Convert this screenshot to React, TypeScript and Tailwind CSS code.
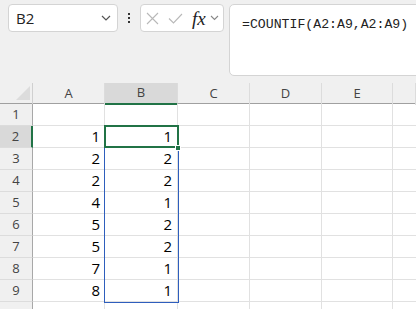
import React from "react";

const colA = [1, 2, 2, 4, 5, 5, 7, 8];
const colB = [1, 2, 2, 1, 2, 2, 1, 1];
const cols = ["A", "B", "C", "D", "E", ""];

export default function App() {
  const font = { fontFamily: '"Open Sans", "Noto Sans", Arial, sans-serif' };
  return (
    <div className="w-[416px] h-[309px] overflow-hidden bg-white relative" style={font}>
      {/* top toolbar */}
      <div className="h-[83px] bg-[#f0f0f0] flex items-start pt-[4px] pl-[8px] overflow-hidden">
        <div className="shrink-0 w-[110px] h-[28px] bg-white border border-[#d4d4d4] rounded-[4px] flex items-center justify-between pl-[7px] pr-[6px]">
          <span className="text-[15px] text-[#222]">B2</span>
          <svg width="10" height="6" viewBox="0 0 10 6"><path d="M1 1l4 4 4-4" fill="none" stroke="#555" strokeWidth="1.2" /></svg>
        </div>
        <div className="shrink-0 w-[22px] h-[28px] flex flex-col items-center justify-center gap-[2px]">
          <div className="w-[2px] h-[2px] bg-[#333]" />
          <div className="w-[2px] h-[2px] bg-[#333]" />
          <div className="w-[2px] h-[2px] bg-[#333]" />
        </div>
        <div className="shrink-0 w-[84px] h-[28px] bg-white border border-[#d4d4d4] rounded-[4px] flex items-center pl-[5px] pr-[3px]">
          <svg width="13" height="13" viewBox="0 0 13 13"><path d="M1 1l11 11M12 1L1 12" stroke="#b8b8b8" strokeWidth="1.1" /></svg>
          <svg width="15" height="11" viewBox="0 0 15 11" className="ml-[9px]"><path d="M1 5.5l4.5 4.5L14 1" fill="none" stroke="#b8b8b8" strokeWidth="1.1" /></svg>
          <span className="ml-[9px] text-[19px] italic text-[#222] leading-none" style={{ fontFamily: '"Liberation Serif", "DejaVu Serif", serif' }}>fx</span>
          <svg width="9" height="6" viewBox="0 0 9 6" className="ml-[4px]"><path d="M1 1l3.5 3.5L8 1" fill="none" stroke="#888" strokeWidth="1.1" /></svg>
        </div>
        <div className="shrink-0 ml-[5px] w-[200px] h-[72px] bg-white border border-[#d4d4d4] rounded-[5px] pl-[12px] pt-[5px]">
          <span className="text-[13.2px] text-[#222]" style={{ fontFamily: '"Liberation Mono", "DejaVu Sans Mono", monospace' }}>=COUNTIF(A2:A9,A2:A9)</span>
        </div>
      </div>

      {/* column headers */}
      <div className="grid grid-cols-[33px_72px_73px_72px_72px_71px_1fr] h-[21px] bg-[#f0f0f0] border-b border-[#a0a0a0]">
        <div className="relative border-r border-[#d0d0d0]">
          <svg className="absolute left-[16px] top-[3px]" width="14" height="14" viewBox="0 0 14 14"><path d="M14 0L14 14L0 14Z" fill="#dcdcdc" /></svg>
        </div>
        {cols.map((c) => (
          <div
            key={c || "f"}
            className={
              "flex items-center justify-center text-[13px] text-[#444] border-r border-[#dcdcdc] " +
              (c === "B" ? "bg-[#d9d9d9] text-[#1e6b3c] border-b-2 border-b-[#217346]" : "")
            }
          >
            {c}
          </div>
        ))}
      </div>

      {/* grid */}
      <div className="relative">
        <div className="grid grid-cols-[33px_72px_73px_72px_72px_71px_1fr] auto-rows-[22px]">
          {Array.from({ length: 10 }).map((_, r) => {
            const row = r + 1;
            const a = row >= 2 && row <= 9 ? colA[row - 2] : null;
            const b = row >= 2 && row <= 9 ? colB[row - 2] : null;
            return (
              <React.Fragment key={row}>
                <div
                  className={
                    "flex items-center justify-center text-[13px] text-[#444] border-b border-[#dcdcdc] " +
                    (row === 2
                      ? "bg-[#d9d9d9] text-[#1e6b3c] border-r-2 border-r-[#217346]"
                      : "bg-[#f0f0f0] border-r border-r-[#a8a8a8]")
                  }
                >
                  {row <= 9 ? row : ""}
                </div>
                <div className="flex items-center justify-end pr-[4px] text-[15px] text-black border-r border-b border-[#e1e1e1]">{a}</div>
                <div className="flex items-center justify-end pr-[5px] text-[15px] text-black border-r border-b border-[#e1e1e1]">{b}</div>
                <div className="border-r border-b border-[#e1e1e1]" />
                <div className="border-r border-b border-[#e1e1e1]" />
                <div className="border-r border-b border-[#e1e1e1]" />
                <div className="border-b border-[#e1e1e1]" />
              </React.Fragment>
            );
          })}
        </div>
        {/* blue range B2:B9 */}
        <div className="absolute left-[104px] top-[22px] w-[75px] h-[177px] border border-[#2e5ebd] pointer-events-none" />
        {/* active cell */}
        <div className="absolute left-[104px] top-[21px] w-[75px] h-[23px] border-2 border-[#217346] pointer-events-none" />
        <div className="absolute left-[175px] top-[41px] w-[6px] h-[6px] bg-[#217346] border border-white pointer-events-none" />
      </div>
    </div>
  );
}
